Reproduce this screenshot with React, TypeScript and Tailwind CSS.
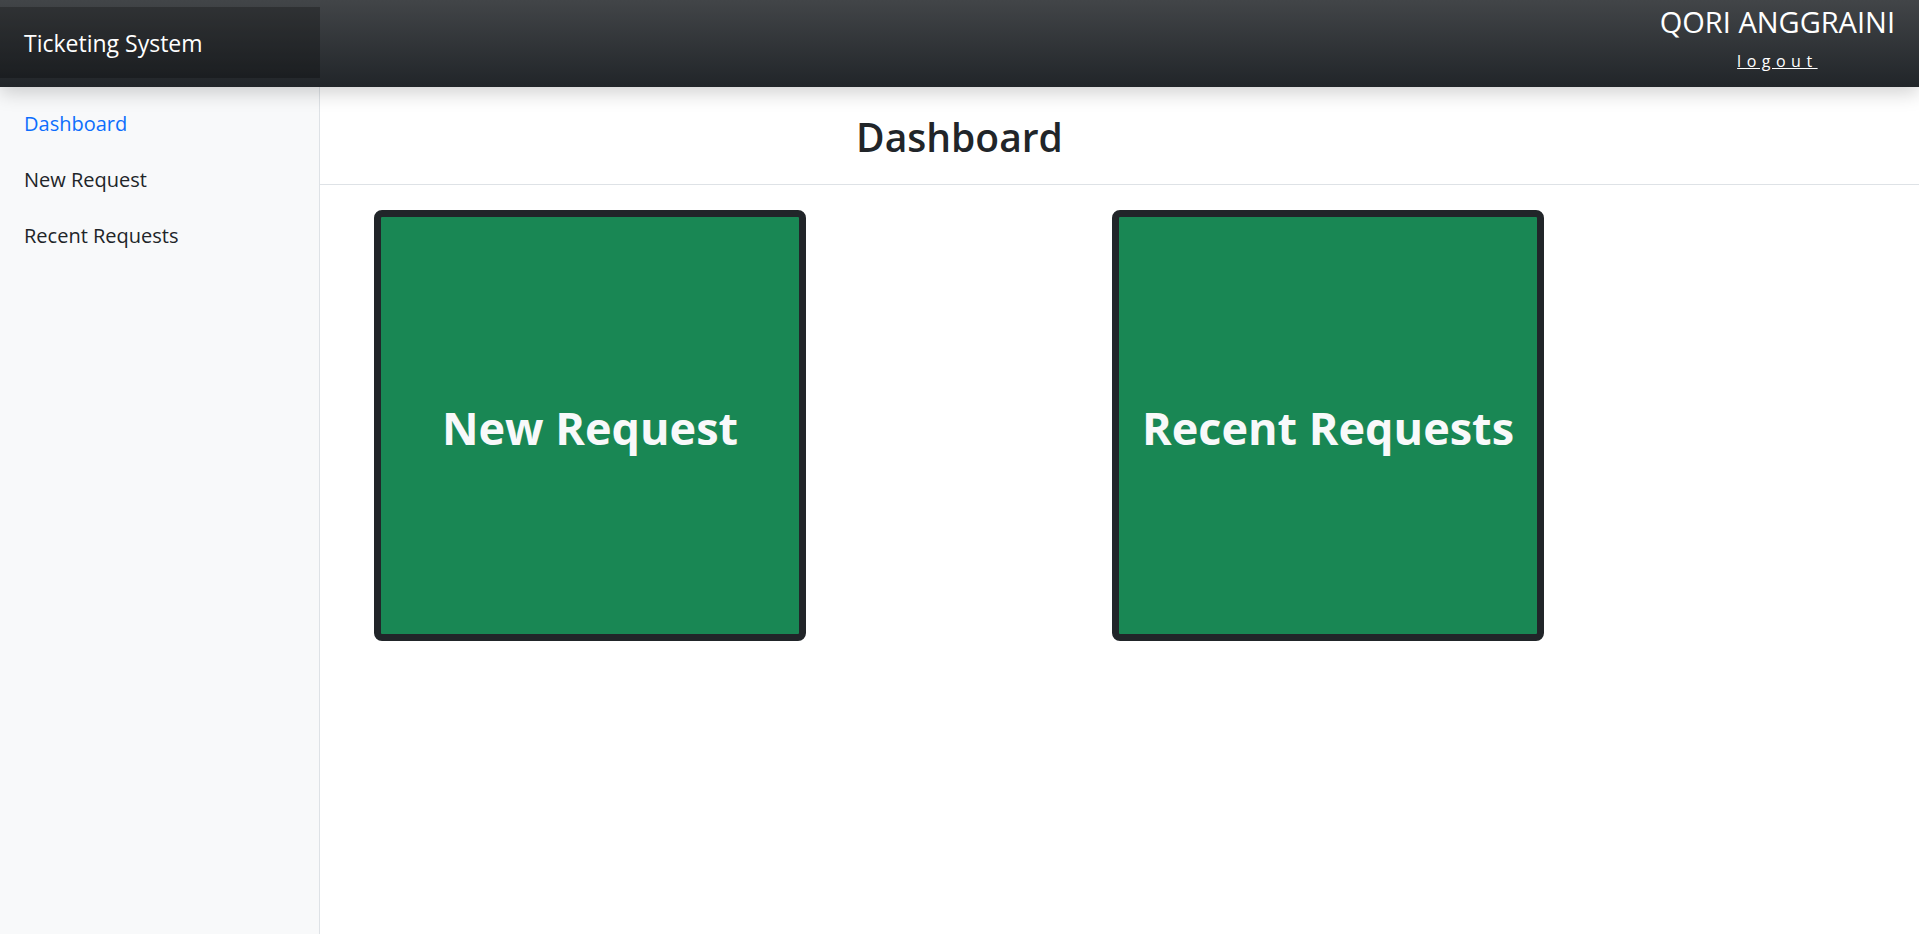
import React from "react";

export default function App() {
  const links = [
    { label: "Dashboard", active: true },
    { label: "New Request", active: false },
    { label: "Recent Requests", active: false },
  ];

  return (
    <div className="min-h-screen flex flex-col bg-white text-[#212529] font-['Open_Sans',sans-serif]">
      {/* top navbar */}
      <header className="relative z-10 h-[87px] flex items-start justify-between bg-[linear-gradient(180deg,#424548,#212529)] shadow-[0_6px_18px_rgba(0,0,0,0.18)]">
        <div className="mt-[7px] w-[320px] h-[71px] flex items-center pl-6 pt-[2px] bg-black/25 text-white text-[23px]">
          Ticketing System
        </div>
        <div className="flex flex-col items-center pr-6 text-white">
          <span className="mt-[4px] text-[29px] leading-[36px]">QORI ANGGRAINI</span>
          <a href="#" className="mt-[9px] text-[16px] leading-[24px] underline tracking-[5.5px]">
            logout
          </a>
        </div>
      </header>

      <div className="flex flex-1">
        {/* sidebar */}
        <nav className="w-[320px] shrink-0 bg-[#f8f9fa] border-r border-[#dee2e6] pt-[9px]">
          <ul>
            {links.map((l) => (
              <li key={l.label}>
                <a
                  href="#"
                  className={
                    "block px-6 py-[13px] text-[20px] font-medium leading-[30px] " +
                    (l.active ? "text-[#0d6efd]" : "text-[#212529]")
                  }
                >
                  {l.label}
                </a>
              </li>
            ))}
          </ul>
        </nav>

        {/* main */}
        <main className="flex-1">
          <div className="h-[98px] flex items-center justify-center pr-[320px] pt-1 border-b border-[#dee2e6]">
            <h2 className="text-[39px] font-semibold">Dashboard</h2>
          </div>
          <div className="flex gap-[306px] pl-[54px] pt-[25px]">
            <a
              href="#"
              className="w-[432px] h-[431px] flex items-center justify-center pt-1 rounded-lg border-[7px] border-[#212529] bg-[#198754] text-[#f8f9fa] text-[45px] font-bold"
            >
              New Request
            </a>
            <a
              href="#"
              className="w-[432px] h-[431px] flex items-center justify-center pt-1 rounded-lg border-[7px] border-[#212529] bg-[#198754] text-[#f8f9fa] text-[45px] font-bold"
            >
              Recent Requests
            </a>
          </div>
        </main>
      </div>
    </div>
  );
}
